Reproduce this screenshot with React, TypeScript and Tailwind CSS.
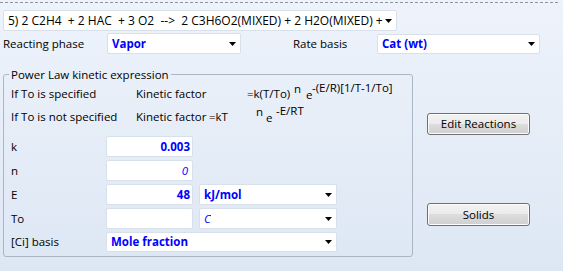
import React from "react";

const Arrow = () => (
  <svg width="7" height="4" viewBox="0 0 7 4" className="shrink-0">
    <path d="M0 0h7L3.5 4z" fill="#000" />
  </svg>
);

function Combo({
  className,
  children,
  pre,
}: {
  className: string;
  children?: React.ReactNode;
  pre?: boolean;
}) {
  return (
    <div
      className={
        "flex items-center justify-between bg-white border border-[#d8e0ea] rounded-[2px] pl-[4px] pr-[4px] " +
        className
      }
    >
      <span className={pre ? "whitespace-pre overflow-hidden" : "whitespace-nowrap overflow-hidden"}>{children}</span>
      <Arrow />
    </div>
  );
}

function Field({ children, className }: { children?: React.ReactNode; className?: string }) {
  return (
    <div
      className={
        "w-[87px] h-[21px] bg-white border border-[#d8e0ea] rounded-[2px] flex items-center justify-end pr-[2px] " +
        (className ?? "")
      }
    >
      {children}
    </div>
  );
}

function Btn({ children, className }: { children: React.ReactNode; className?: string }) {
  return (
    <button
      className={
        "w-[103px] flex items-center justify-center border border-[#707070] rounded-[3px] text-black bg-[linear-gradient(#f2f2f2,#ebebeb_50%,#dddddd_50%,#cfcfcf)] shadow-[inset_0_0_0_1px_#fcfcfc] " +
        (className ?? "")
      }
    >
      {children}
    </button>
  );
}

export default function App() {
  return (
    <div className="w-[563px] h-[271px] overflow-hidden bg-[linear-gradient(#eef3fb,#dde7f4)] font-['Open_Sans',sans-serif] text-[11.5px] text-black pt-[2px]">
      <div className="w-[558px] border-t border-dashed border-[#8f949c]" />

      <Combo pre className="mt-[7px] ml-[3px] w-[394px] h-[21px] text-[12px]">
        {"5) 2 C2H4  + 2 HAC  + 3 O2  -->  2 C3H6O2(MIXED) + 2 H2O(MIXED) + "}
      </Combo>

      <div className="mt-[2px] h-[21px] flex items-center">
        <span className="ml-[3px] w-[104px]">Reacting phase</span>
        <Combo className="w-[134px] h-[21px] font-bold text-[#0000ff]">Vapor</Combo>
        <span className="ml-[52px] w-[84px]">Rate basis</span>
        <Combo className="w-[163px] h-[20px] font-bold text-[#0000ff]">Cat (wt)</Combo>
      </div>

      <div className="mt-[13px] flex items-start">
        <fieldset className="ml-[3px] w-[410px] m-0 border border-[#a9b6c6] rounded-[3px] pl-[7px] pr-0 pb-[4px] pt-0">
          <legend className="-ml-[2px] px-[2px] leading-[15px]">Power Law kinetic expression</legend>

          <div className="h-[23px] flex items-center whitespace-nowrap">
            <span className="w-[125px] shrink-0">If To is specified</span>
            <span className="w-[111px] shrink-0">Kinetic factor</span>
            <span className="w-[47px] shrink-0">=k(T/To)</span>
            <span className="w-[12px] shrink-0 relative -top-[5px]">n</span>
            <span className="w-[6px] shrink-0 relative top-[1px]">e</span>
            <span className="relative -top-[6px]">-(E/R)[1/T-1/To]</span>
          </div>
          <div className="h-[23px] flex items-center whitespace-nowrap">
            <span className="w-[125px] shrink-0">If To is not specified</span>
            <span className="w-[73px] shrink-0">Kinetic factor</span>
            <span className="w-[47px] shrink-0">=kT</span>
            <span className="w-[10px] shrink-0 relative -top-[5px]">n</span>
            <span className="w-[10px] shrink-0 relative top-[1px]">e</span>
            <span className="relative -top-[6px]">-E/RT</span>
          </div>

          <div className="mt-[8px] flex flex-col gap-[3px]">
            <div className="flex items-center">
              <span className="w-[95px]">k</span>
              <Field className="font-bold text-[#0000ff]">0.003</Field>
            </div>
            <div className="flex items-center">
              <span className="w-[95px]">n</span>
              <Field className="italic text-[#0000ff] pr-[4px]">0</Field>
            </div>
            <div className="flex items-center">
              <span className="w-[95px]">E</span>
              <Field className="font-bold text-[#0000ff]">48</Field>
              <Combo className="ml-[6px] w-[138px] h-[21px] font-bold text-[#0000ff]">kJ/mol</Combo>
            </div>
            <div className="flex items-center">
              <span className="w-[95px]">To</span>
              <Field />
              <Combo className="ml-[6px] w-[138px] h-[21px] italic text-[#0000ff]">C</Combo>
            </div>
            <div className="flex items-center">
              <span className="w-[95px]">[Ci] basis</span>
              <Combo className="w-[231px] h-[20px] font-bold text-[#0000ff]">Mole fraction</Combo>
            </div>
          </div>
        </fieldset>

        <div className="ml-[14px] flex flex-col">
          <Btn className="mt-[46px] h-[22px]">Edit Reactions</Btn>
          <Btn className="mt-[68px] h-[23px]">Solids</Btn>
        </div>
      </div>
    </div>
  );
}
